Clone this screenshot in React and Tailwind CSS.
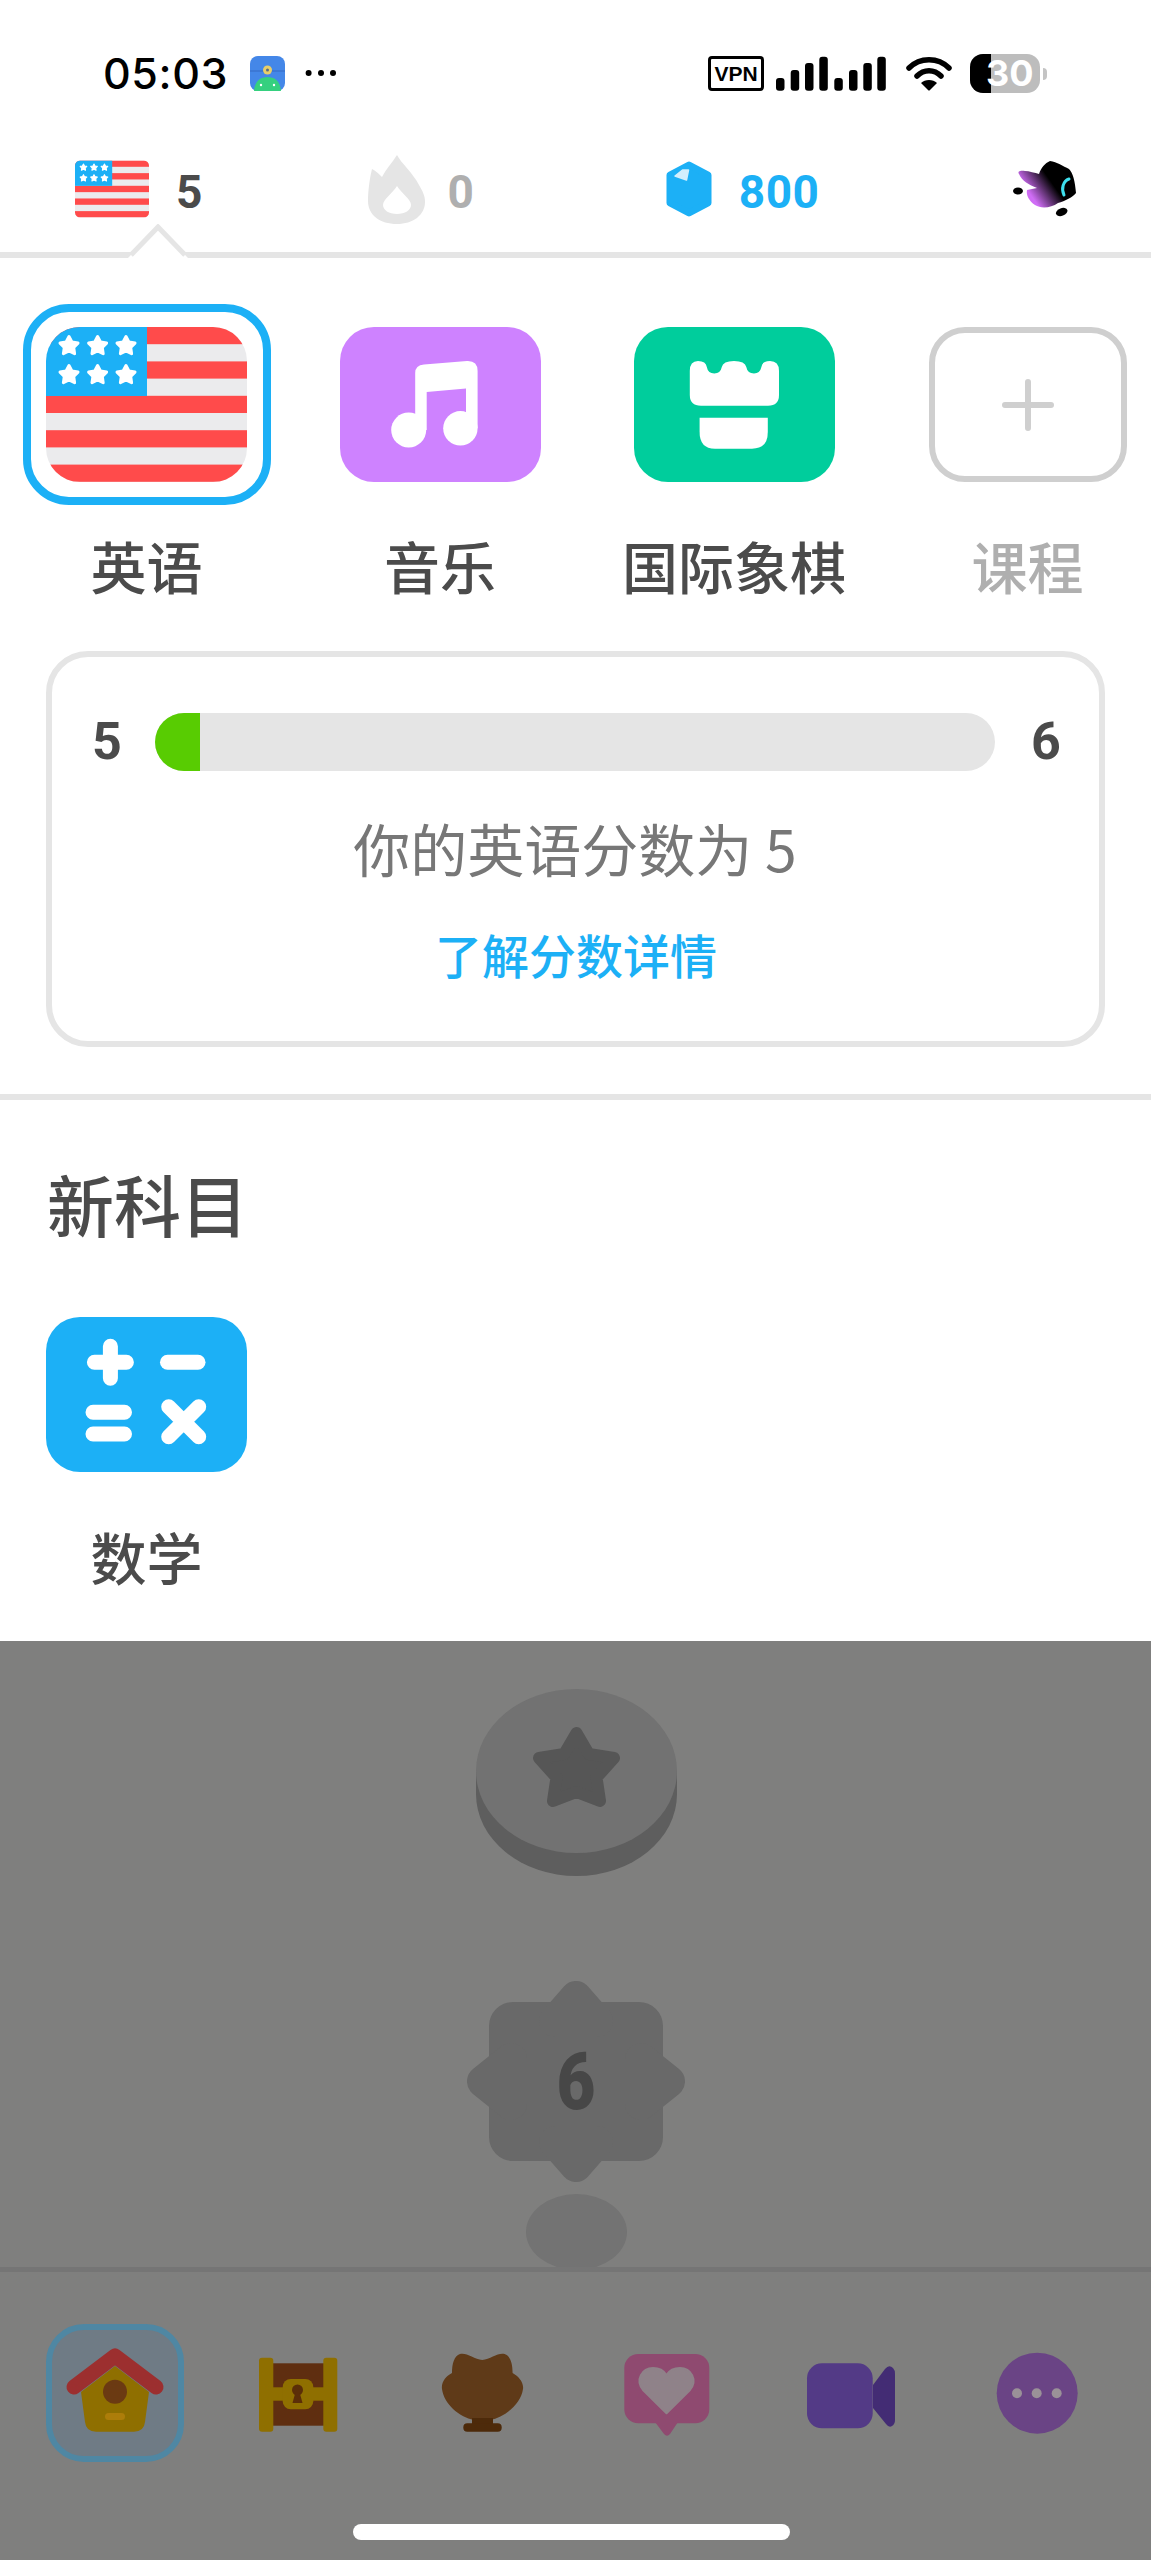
import React, { useId } from "react";

const stars = [
  [23, 19], [51.6, 19], [80, 19],
  [23, 48], [51.6, 48], [80, 48],
];

function starPoints(cx, cy, R) {
  const pts = [];
  for (let i = 0; i < 10; i++) {
    const r = i % 2 === 0 ? R : R * 0.52;
    const a = (-90 + i * 36) * (Math.PI / 180);
    pts.push(`${(cx + r * Math.cos(a)).toFixed(1)},${(cy + r * Math.sin(a)).toFixed(1)}`);
  }
  return pts.join(" ");
}

function Flag({ className, rx = 34 }) {
  const id = useId();
  return (
    <svg viewBox="0 0 201 155" className={className}>
      <defs>
        <clipPath id={id}>
          <rect width="201" height="155" rx={rx} />
        </clipPath>
      </defs>
      <g clipPath={`url(#${id})`}>
        <rect width="201" height="155" fill="#ebebed" />
        {[0, 2, 4, 6, 8].map((i) => (
          <rect key={i} y={i * 17.2} width="201" height="17.2" fill="#ff4b4b" />
        ))}
        <rect width="101" height="69" fill="#1cb0f6" />
        {stars.map(([x, y], i) => (
          <polygon key={i} points={starPoints(x, y, 9.5)} fill="#fff" stroke="#fff" strokeWidth="3" strokeLinejoin="round" />
        ))}
      </g>
    </svg>
  );
}

function Tile({ color, children }) {
  return (
    <svg viewBox="0 0 201 155" className="w-[201px] h-[155px]">
      <rect width="201" height="155" rx="34" fill={color} />
      {children}
    </svg>
  );
}

function CourseCol({ label, muted, children }) {
  return (
    <div className="flex flex-col items-center">
      <div className="h-[201px] flex items-center justify-center">{children}</div>
      <div className={`mt-[32px] text-[56px] leading-[56px] font-medium ${muted ? "text-[#afafaf]" : "text-[#4b4b4b]"}`}>{label}</div>
    </div>
  );
}

function StatusBar() {
  const xs = [776, 790.7, 805, 819.3, 834.3, 849, 863.3, 877.3];
  const tops = [78, 70, 63, 56.7, 78, 70, 63, 56.7];
  return (
    <div className="h-[146px] flex items-center text-black shrink-0">
      <span className="ml-[103px] font-['Inter',sans-serif] font-medium text-[43px] leading-none tracking-[0.6px]">05:03</span>
      <svg viewBox="0 0 35 35" className="ml-[22px] w-[35px] h-[35px]">
        <rect width="35" height="35" rx="8" fill="#4487e8" />
        <path d="M0 15 H35" stroke="#3a73cf" strokeWidth="1.5" />
        <path d="M4 35 C5 24 11 21 17.5 21 C24 21 30 24 31 35 Z" fill="#35d07f" />
        <circle cx="17.5" cy="14" r="4.5" fill="#e8cf6a" />
        <circle cx="17.5" cy="14" r="1.5" fill="#5a6a80" />
        <circle cx="11" cy="29" r="1.2" fill="#fff" />
        <circle cx="24" cy="29" r="1.2" fill="#fff" />
      </svg>
      <svg viewBox="0 0 34 8" className="ml-[20px] w-[34px] h-[8px]">
        <circle cx="3.6" cy="4" r="3" fill="#000" />
        <circle cx="16" cy="4" r="3" fill="#000" />
        <circle cx="28" cy="4" r="3" fill="#000" />
      </svg>
      <div className="ml-auto flex items-center">
        <div className="w-[56px] h-[35px] border-[3px] border-black rounded-[4px] flex items-center justify-center font-['Liberation_Sans',sans-serif] font-bold text-[21px] leading-none">VPN</div>
        <svg viewBox="776 54 111 38" className="ml-[12px] w-[111px] h-[38px]">
          {xs.map((x, i) => (
            <rect key={i} x={x} y={tops[i]} width="8.5" height={90.7 - tops[i]} rx="3" fill="#000" />
          ))}
        </svg>
        <svg viewBox="0 0 46 36" className="ml-[19px] w-[46px] h-[36px]">
          <path d="M3 13 C14 2 32 2 43 13" fill="none" stroke="#000" strokeWidth="5.5" strokeLinecap="round" />
          <path d="M11 21 C18 14 28 14 35 21" fill="none" stroke="#000" strokeWidth="5.5" strokeLinecap="round" />
          <path d="M15 28 C19 24 27 24 31 28 L24 35 Q23 36 22 35 Z" fill="#000" />
        </svg>
        <div className="relative ml-[18px] mr-[111px] w-[70px] h-[39px]">
          <div className="w-[70px] h-[39px] rounded-[13px] overflow-hidden flex bg-[#bdbdbd]">
            <div className="w-[21px] h-full bg-black" />
          </div>
          <span className="absolute left-[16px] top-0 h-[39px] flex items-center font-['Inter',sans-serif] font-bold text-[36px] leading-none text-white">30</span>
          <div className="absolute left-[73px] top-[14px] w-[4px] h-[12px] rounded-r-full bg-[#c4c4c4]" />
        </div>
      </div>
    </div>
  );
}

function TabBar() {
  return (
    <div className="relative h-[112px] border-b-[6px] border-[#e5e5e5] pt-[14px] shrink-0">
      <div className="h-[58px] flex items-center font-['Roboto',sans-serif] font-bold text-[46px] leading-none">
        <Flag className="ml-[75px] w-[74px] h-[58px]" rx="14" />
        <span className="ml-[27px] pt-[6px] text-[#4b4b4b]">5</span>
        <svg viewBox="0 0 57 69" className="ml-[166px] w-[57px] h-[69px] shrink-0">
          <path d="M29 0 C33 8 45 18 51 30 C55 37 57 41 57 47 C57 60 45 69 29 69 C12 69 0 60 0 46 C0 35 2 22 4 14 C8 16 12 20 14 22 C18 14 24 8 29 0 Z" fill="#e5e5e5" />
          <path d="M29 31 C33 38 43 44 43 50 C43 55 37 59 29 59 C21 59 15 55 15 50 C15 44 25 38 29 31 Z" fill="#fff" />
        </svg>
        <span className="ml-[22px] pt-[6px] text-[#afafaf]">0</span>
        <svg viewBox="0 0 46 56" className="ml-[192px] w-[46px] h-[56px] shrink-0">
          <polygon points="23,4 42,14 42,42 23,52 4,42 4,14" fill="#1cb0f6" stroke="#1cb0f6" strokeWidth="7" strokeLinejoin="round" />
          <polygon points="16.5,9 22.5,9 20.5,19 9,15" fill="#d3effd" stroke="#d3effd" strokeWidth="1.5" strokeLinejoin="round" />
        </svg>
        <span className="ml-[27px] pt-[6px] text-[#1cb0f6] tracking-[0.5px]">800</span>
        <svg viewBox="0 0 64 56" className="ml-[193px] w-[64px] h-[56px] shrink-0">
          <defs>
            <linearGradient id="duoGrad" x1="10" y1="40" x2="50" y2="12" gradientUnits="userSpaceOnUse">
              <stop offset="0.2" stopColor="#cf6df5" />
              <stop offset="0.7" stopColor="#000" />
            </linearGradient>
          </defs>
          <path d="M37 0 C44 1 50 5 56 8 C60 12 62 20 63 32 C60 36 52 40 45 42 C38 47 28 48 22 44 C16 40 13 34 14 29 L24 27 C16 24 9 20 6 13 C4 10 8 9 12 10 C16 10 22 12 26 13 C28 7 32 2 37 0 Z" fill="url(#duoGrad)" />
          <path d="M56 18 C50 20 48 28 51 34" fill="none" stroke="#3ee0ee" strokeWidth="3" strokeLinecap="round" />
          <ellipse cx="5" cy="30" rx="5" ry="3.5" fill="#000" />
          <ellipse cx="48.7" cy="51" rx="6" ry="3.8" fill="#000" transform="rotate(-20 48.7 51)" />
        </svg>
      </div>
      <svg viewBox="0 0 60 34" className="absolute left-[128px] top-[78px] w-[60px] h-[34px]">
        <polygon points="0,34 30,3 60,34" fill="#fff" />
        <polyline points="3,31 30,3 57,31" fill="none" stroke="#e5e5e5" strokeWidth="5" />
      </svg>
    </div>
  );
}

function Courses() {
  return (
    <div className="grid grid-cols-[293px_294px_294px_270px] pt-[46px]">
      <CourseCol label="英语">
        <div className="w-[248px] h-[201px] border-[8px] border-[#1cb0f6] rounded-[46px] flex items-center justify-center">
          <Flag className="w-[201px] h-[155px]" />
        </div>
      </CourseCol>
      <CourseCol label="音乐">
        <Tile color="#ce82ff">
          <path d="M75.2 102 V46 Q75.2 38.5 84 37.6 L127 34 Q137.6 33.5 137.6 44 V101 H126 V61.5 L86.7 65 V103 Z" fill="#fff" />
          <circle cx="68.7" cy="103" r="17.5" fill="#fff" />
          <circle cx="120.4" cy="101.3" r="17.2" fill="#fff" />
        </Tile>
      </CourseCol>
      <CourseCol label="国际象棋">
        <Tile color="#00cd9c">
          <path d="M55.8 44 Q55.8 34 64 34 Q72 34 72.8 40 Q74 46.5 80.3 46.5 Q86.5 46.5 87.8 40 Q89 34 100 34 Q111 34 112.3 40 Q113.5 46.5 120 46.5 Q126 46.5 127.4 40 Q128 34 136 34 Q145 34 145 44 V68 Q145 78.7 134 78.7 H67 Q55.8 78.7 55.8 68 Z" fill="#fff" />
          <path d="M65.6 90.7 H133.8 V105 Q133.8 121.7 118 121.7 H81 Q65.6 121.7 65.6 105 Z" fill="#fff" />
        </Tile>
      </CourseCol>
      <div className="w-[293px]">
        <CourseCol label="课程" muted>
          <div className="w-[198px] h-[155px] border-[6px] border-[#cfcfcf] rounded-[36px] flex items-center justify-center">
            <svg viewBox="0 0 52 52" className="w-[52px] h-[52px]">
              <path d="M26 3 V49 M3 26 H49" stroke="#cfcfcf" strokeWidth="6" strokeLinecap="round" />
            </svg>
          </div>
        </CourseCol>
      </div>
    </div>
  );
}

function ScoreCard() {
  return (
    <div className="mx-[46px] mt-[58px] h-[396px] border-[6px] border-[#e5e5e5] rounded-[42px] pt-[56px] pl-[40px] pr-[41px] flex flex-col items-center">
      <div className="w-full h-[58px] flex items-center font-['Roboto',sans-serif] font-bold text-[52px] leading-none text-[#4b4b4b]">
        <span className="w-[27px] text-center">5</span>
        <div className="ml-[36px] flex-1 h-[58px] rounded-full bg-[#e5e5e5] overflow-hidden">
          <div className="w-[45px] h-full bg-[#58cc02]" />
        </div>
        <span className="ml-[36px] w-[27px] text-center">6</span>
      </div>
      <div className="mt-[46px] text-[57px] leading-[60px] text-[#777777] whitespace-pre">你的英语分数为 5</div>
      <div className="mt-[53px] text-[47px] leading-[48px] font-medium text-[#1cb0f6] pl-[2px]">了解分数详情</div>
    </div>
  );
}

function NewSubjects() {
  return (
    <div className="h-[541px] bg-white">
      <div className="pl-[47px] pt-[70px] text-[67px] leading-[65px] font-medium text-[#4b4b4b]">新科目</div>
      <div className="w-[293px] mt-[82px] flex flex-col items-center">
        <Tile color="#1cb0f6">
          <g stroke="#fff" strokeWidth="15" strokeLinecap="round">
            <path d="M48.4 45.3 H80.4 M64.4 29.3 V61.3" />
            <path d="M121.5 45.3 H152" />
            <path d="M47 95.3 H78.5 M47 117 H78.5" />
            <path d="M122.7 89.7 L152.7 119.7 M152.7 89.7 L122.7 119.7" />
          </g>
        </Tile>
        <div className="mt-[56px] text-[56px] leading-[56px] font-medium text-[#4b4b4b]">数学</div>
      </div>
    </div>
  );
}

function Path() {
  return (
    <div className="h-[626px] pt-[48px] flex flex-col items-center pl-[1px]">
      <svg viewBox="0 0 201 187" className="w-[201px] h-[187px] shrink-0">
        <ellipse cx="100.5" cy="105" rx="100.5" ry="82" fill="#5e5e5e" />
        <rect y="82" width="201" height="23" fill="#5e5e5e" />
        <ellipse cx="100.5" cy="82" rx="100.5" ry="82" fill="#727272" />
        <polygon points="100.5,44 112.8,65 138,69 120.5,88.5 124,112 100.5,103 77,112 80.5,88.5 63,69 88.2,65" fill="#565656" stroke="#565656" strokeWidth="12" strokeLinejoin="round" />
      </svg>
      <div className="relative mt-[105px] w-[218px] h-[201px] shrink-0">
        <svg viewBox="0 0 218 201" className="w-[218px] h-[201px]">
          <rect x="22" y="21" width="174" height="159" rx="24" fill="#696969" />
          <g fill="#696969" stroke="#696969" strokeWidth="32" strokeLinejoin="round">
            <polygon points="88,40 109,16 130,40" />
            <polygon points="88,161 109,185 130,161" />
            <polygon points="44,78 16,100.5 44,123" />
            <polygon points="174,78 202,100.5 174,123" />
          </g>
        </svg>
        <span className="absolute inset-0 flex items-center justify-center font-['Roboto',sans-serif] font-black text-[80px] leading-none text-[#474747] scale-x-[0.84]">6</span>
      </div>
      <div className="mt-[12px] w-[101px] h-[73px] overflow-hidden shrink-0">
        <div className="w-[101px] h-[76px] rounded-[50%] bg-[#737373]" />
      </div>
    </div>
  );
}

function NavIcon({ children }) {
  return (
    <svg viewBox="0 0 138 138" className="w-[138px] h-[138px]">
      {children}
    </svg>
  );
}

function BottomNav() {
  return (
    <div className="h-[293px] border-t-[5px] border-[#757575] pt-[52px]">
      <div className="grid grid-cols-6 px-[23px]">
        <div className="flex justify-center">
          <div className="relative w-[138px] h-[138px] rounded-[38px] border-[6px] border-[#4f87a3] bg-[#6f7b85]">
            <svg viewBox="0 0 138 138" className="absolute left-[-6px] top-[-6px] w-[138px] h-[138px]">
              <path d="M69 42 L103 68 L99 98 Q98 107.7 88 107.7 H50 Q40 107.7 39 98 L35 68 Z" fill="#8f6f00" />
              <path d="M28 63 L69 32 L110 63" fill="none" stroke="#9c2f2f" strokeWidth="15" strokeLinecap="round" strokeLinejoin="round" />
              <circle cx="69" cy="67.7" r="12" fill="#6b3a12" />
              <rect x="59" y="89" width="20" height="7" rx="3.5" fill="#ad7d0a" />
            </svg>
          </div>
        </div>
        <div className="flex justify-center">
          <NavIcon>
            <rect x="43" y="39.3" width="51" height="62.4" fill="#5f2e10" />
            <rect x="40" y="63.3" width="56" height="13.4" fill="#8f6f00" />
            <rect x="52.7" y="55" width="30.6" height="30.3" rx="8" fill="#8f6f00" />
            <rect x="29" y="33.7" width="14.3" height="74" rx="3" fill="#8f6f00" />
            <rect x="93.3" y="33.7" width="14" height="74" rx="3" fill="#8f6f00" />
            <circle cx="67.5" cy="66" r="5.5" fill="#5b2e08" />
            <path d="M65.5 68 H69.5 L72.5 79 H62.5 Z" fill="#5b2e08" />
          </NavIcon>
        </div>
        <div className="flex justify-center">
          <NavIcon>
            <path d="M68.3 36 C60 35 52 28 46 30 C40 32 38 40 38 49 C32 52 27 58 28 65 C30 80 45 93 60 96 L76 96 C91 93 107 80 109 65 C110 58 104 52 98.6 49 C98.6 40 96.6 32 90.6 30 C84.6 28 76.6 35 68.3 36 Z" fill="#5f3a18" />
            <path d="M58 94 H79 V101 H58 Z" fill="#4d2a0a" />
            <rect x="49.3" y="99.3" width="38.4" height="8.4" rx="4" fill="#4d2a0a" />
          </NavIcon>
        </div>
        <div className="flex justify-center">
          <NavIcon>
            <rect x="25.3" y="30" width="85" height="69.3" rx="14" fill="#8f4a70" />
            <path d="M56 98 H79 L71 110 Q68 113.5 65 110 Z" fill="#8f4a70" />
            <path d="M67.5 89.3 L44 66 C36 56 43 44 54 44 C60 44 65 47 67.5 51 C70 47 75 44 81 44 C92 44 99 56 91 66 Z" fill="#8f8289" stroke="#8f8289" strokeWidth="2" strokeLinejoin="round" />
          </NavIcon>
        </div>
        <div className="flex justify-center">
          <NavIcon>
            <rect x="24" y="39.3" width="65.7" height="65" rx="15" fill="#533a86" />
            <path d="M90 61 L102 45 Q106 40 110 44 Q112 46 112 50 V96 Q112 100 109 102 Q106 104 103 100 L90 84 Z" fill="#432c74" />
          </NavIcon>
        </div>
        <div className="flex justify-center">
          <NavIcon>
            <circle cx="70.2" cy="69.2" r="40.5" fill="#6a4485" />
            <circle cx="50" cy="69.2" r="5" fill="#9a9198" />
            <circle cx="69.7" cy="69.2" r="5" fill="#9a9198" />
            <circle cx="89.7" cy="69.2" r="5" fill="#9a9198" />
          </NavIcon>
        </div>
      </div>
      <div className="ml-[353px] mt-[62px] w-[437px] h-[16px] rounded-full bg-white" />
    </div>
  );
}

export default function App() {
  return (
    <div className="w-[1151px] h-[2560px] overflow-hidden bg-white font-['Noto_Sans_CJK_SC',sans-serif] flex flex-col">
      <StatusBar />
      <TabBar />
      <Courses />
      <ScoreCard />
      <div className="mt-[47px] h-[6px] bg-[#e5e5e5] shrink-0" />
      <NewSubjects />
      <div className="bg-[#7f7f7e] flex-1">
        <Path />
        <BottomNav />
      </div>
    </div>
  );
}
